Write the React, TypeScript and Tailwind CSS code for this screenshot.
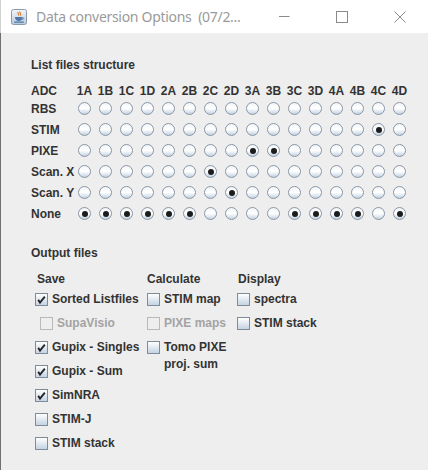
import React from "react";

const cols = ["1A","1B","1C","1D","2A","2B","2C","2D","3A","3B","3C","3D","4A","4B","4C","4D"];
const rows: { label: string; on: string[] }[] = [
  { label: "RBS", on: [] },
  { label: "STIM", on: ["4C"] },
  { label: "PIXE", on: ["3A", "3B"] },
  { label: "Scan. X", on: ["2C"] },
  { label: "Scan. Y", on: ["2D"] },
  { label: "None", on: ["1A","1B","1C","1D","2A","2B","3C","3D","4A","4B","4D"] },
];

function Radio({ on }: { on: boolean }) {
  return (
    <span className="w-[13px] h-[13px] rounded-full border border-[#8a97a5] bg-gradient-to-b from-[#f2f5f8] via-white to-[#c3d2e2] flex items-center justify-center">
      {on && <span className="w-[6px] h-[6px] rounded-full bg-[#1c1c1c]" />}
    </span>
  );
}

function Check({ on, disabled }: { on?: boolean; disabled?: boolean }) {
  return (
    <span
      className={
        disabled
          ? "w-[13px] h-[13px] shrink-0 border border-[#b9b9b9] bg-[#eeeeee] block"
          : "w-[13px] h-[13px] shrink-0 border border-[#7e8c9a] bg-gradient-to-b from-white to-[#c4d3e3] block relative"
      }
    >
      {on && (
        <svg width="11" height="11" viewBox="0 0 11 11" className="absolute left-0 top-0">
          <path d="M2.2 5.8 L4 8.6 L8.8 2.6" stroke="#222" strokeWidth="1.8" fill="none" />
        </svg>
      )}
    </span>
  );
}

function Item({
  label,
  on,
  disabled,
  indent,
}: {
  label: string;
  on?: boolean;
  disabled?: boolean;
  indent?: boolean;
}) {
  return (
    <div className={"h-[24px] flex items-center gap-[4px] " + (indent ? "pl-[5px]" : "")}>
      <Check on={on} disabled={disabled} />
      <span className={"whitespace-nowrap " + (disabled ? "text-[#a3a3a3]" : "text-[#333333]")}>{label}</span>
    </div>
  );
}

function JavaIcon() {
  return (
    <svg width="16" height="16" viewBox="0 0 16 16">
      <defs>
        <linearGradient id="jg" x1="0" y1="0" x2="0" y2="1">
          <stop offset="0" stopColor="#f3f6fa" />
          <stop offset="1" stopColor="#b9c9da" />
        </linearGradient>
      </defs>
      <rect x="0.5" y="0.5" width="15" height="15" rx="2" fill="url(#jg)" stroke="#8b9aab" />
      <path d="M7 3 C6 4.5 8.5 5 7.5 6.5" stroke="#e0701a" strokeWidth="1.1" fill="none" />
      <path d="M9 2.5 C8 4 10.5 4.5 9.5 6.5" stroke="#e0701a" strokeWidth="1.1" fill="none" />
      <path d="M4 8 H11.5 C11.5 10.5 10 12 7.75 12 C5.5 12 4 10.5 4 8 Z" fill="#4f78a8" />
      <path d="M11.5 8.5 C13 8.5 13 10.5 11 10.5" stroke="#4f78a8" strokeWidth="1" fill="none" />
      <rect x="3" y="12.5" width="10" height="1.2" rx="0.6" fill="#4f78a8" />
    </svg>
  );
}

export default function App() {
  return (
    <div
      className="w-[428px] h-[470px] bg-[#eeeeee] flex flex-col overflow-hidden"
      style={{ fontFamily: '"Liberation Sans", Arial, sans-serif' }}
    >
      {/* Title bar */}
      <div className="h-[33px] bg-white flex items-center shrink-0 border-l border-[#d0d0d0]">
        <div className="pl-[10px] flex items-center shrink-0">
          <JavaIcon />
        </div>
        <span
          className="ml-[9px] text-[14px] tracking-[-0.3px] text-[#9a9a9a] whitespace-nowrap overflow-hidden min-w-0"
          style={{ fontFamily: '"Noto Sans", "Open Sans", sans-serif' }}
        >
          Data conversion Options&nbsp;&nbsp;(07/2...
        </span>
        <div className="ml-auto flex items-center h-full shrink-0 mr-[-1px]">
          <div className="w-[58px] h-full flex items-center justify-center">
            <svg width="11" height="11" viewBox="0 0 11 11">
              <path d="M0 5.5 H10.5" stroke="#8a8a8a" strokeWidth="1" />
            </svg>
          </div>
          <div className="w-[58px] h-full flex items-center justify-center">
            <svg width="12" height="12" viewBox="0 0 12 12">
              <rect x="0.5" y="0.5" width="11" height="11" stroke="#8a8a8a" fill="none" />
            </svg>
          </div>
          <div className="w-[58px] h-full flex items-center justify-center">
            <svg width="12" height="12" viewBox="0 0 12 12">
              <path d="M0.5 0.5 L11.5 11.5 M11.5 0.5 L0.5 11.5" stroke="#8a8a8a" strokeWidth="1" />
            </svg>
          </div>
        </div>
      </div>

      {/* Body */}
      <div className="flex-1 border-l border-[#707070] pl-[30px] pt-[24px] text-[12px] font-bold text-[#333333] leading-[16px]">
        <div className="h-[16px]">List files structure</div>

        <div className="mt-[11px] grid grid-cols-[43px_repeat(16,21px)]">
          <div className="h-[14px] flex items-center">ADC</div>
          {cols.map((c) => (
            <div key={c} className="h-[14px] flex items-center justify-center">
              {c}
            </div>
          ))}
          {rows.map((r) => (
            <React.Fragment key={r.label}>
              <div className="h-[21px] flex items-center whitespace-nowrap">{r.label}</div>
              {cols.map((c) => (
                <div key={c} className="h-[21px] flex items-center justify-center">
                  <Radio on={r.on.includes(c)} />
                </div>
              ))}
            </React.Fragment>
          ))}
        </div>

        <div className="mt-[21px] h-[16px]">Output files</div>

        <div className="mt-[10px] flex">
          <div className="w-[116px] pl-[4px]">
            <div className="h-[16px] pl-[2px]">Save</div>
            <Item label="Sorted Listfiles" on />
            <Item label="SupaVisio" disabled indent />
            <Item label="Gupix - Singles" on />
            <Item label="Gupix - Sum" on />
            <Item label="SimNRA" on />
            <Item label="STIM-J" />
            <Item label="STIM stack" />
          </div>
          <div className="w-[90px]">
            <div className="h-[16px]">Calculate</div>
            <Item label="STIM map" />
            <Item label="PIXE maps" disabled />
            <div className="flex items-start gap-[4px] pt-[4px]">
              <span className="mt-[2px]">
                <Check />
              </span>
              <span className="leading-[16.5px]">
                Tomo PIXE
                <br />
                proj. sum
              </span>
            </div>
          </div>
          <div>
            <div className="h-[16px] pl-[1px]">Display</div>
            <Item label="spectra" />
            <Item label="STIM stack" />
          </div>
        </div>
      </div>
    </div>
  );
}
